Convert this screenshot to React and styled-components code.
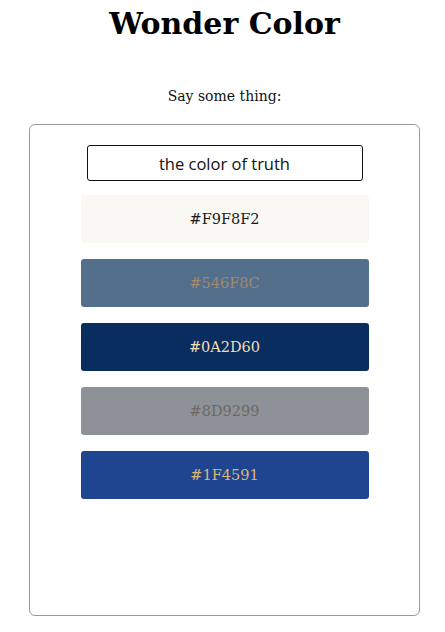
import React, { useState } from "react";
import styled, { createGlobalStyle } from "styled-components";

const GlobalStyle = createGlobalStyle`
  body {
    margin: 0;
    background: #fff;
    font-family: "DejaVu Serif", Georgia, serif;
  }
`;

const Page = styled.div`
  display: flex;
  flex-direction: column;
  align-items: center;
  padding: 0 25px 0 29px;
`;

const Title = styled.h1`
  margin: 6px 0 0;
  font-size: 30px;
  font-weight: bold;
  color: #000;
`;

const Prompt = styled.p`
  margin: 47px 0 20px;
  font-size: 14px;
  color: #111;
`;

const Card = styled.div`
  box-sizing: border-box;
  width: 100%;
  height: 492px;
  border: 1px solid #999;
  border-radius: 6px;
  padding: 20px 0;
  display: flex;
  flex-direction: column;
  align-items: center;
  gap: 16px;
`;

const Input = styled.input`
  box-sizing: border-box;
  width: 276px;
  height: 36px;
  border: 1px solid #111;
  border-radius: 3px;
  text-align: center;
  font-family: "Open Sans", sans-serif;
  font-size: 16.5px;
  color: #111;
  margin-bottom: -2px;
  outline: none;
`;

const Swatch = styled.div`
  width: 288px;
  height: 48px;
  border-radius: 3px;
  background: ${(p) => p.$bg};
  color: ${(p) => p.$fg};
  display: flex;
  align-items: center;
  justify-content: center;
  font-size: 14.5px;
`;

const colors = [
  { bg: "#F9F8F2", fg: "#1a1a1a" },
  { bg: "#546F8C", fg: "#a08a6c" },
  { bg: "#0A2D60", fg: "#f3dfb6" },
  { bg: "#8D9299", fg: "#6e6860" },
  { bg: "#1F4591", fg: "#dcb673" },
];

export default function App() {
  const [text, setText] = useState("the color of truth");
  return (
    <Page>
      <GlobalStyle />
      <Title>Wonder Color</Title>
      <Prompt>Say some thing:</Prompt>
      <Card>
        <Input value={text} onChange={(e) => setText(e.target.value)} />
        {colors.map((c) => (
          <Swatch key={c.bg} $bg={c.bg} $fg={c.fg}>
            {c.bg}
          </Swatch>
        ))}
      </Card>
    </Page>
  );
}
